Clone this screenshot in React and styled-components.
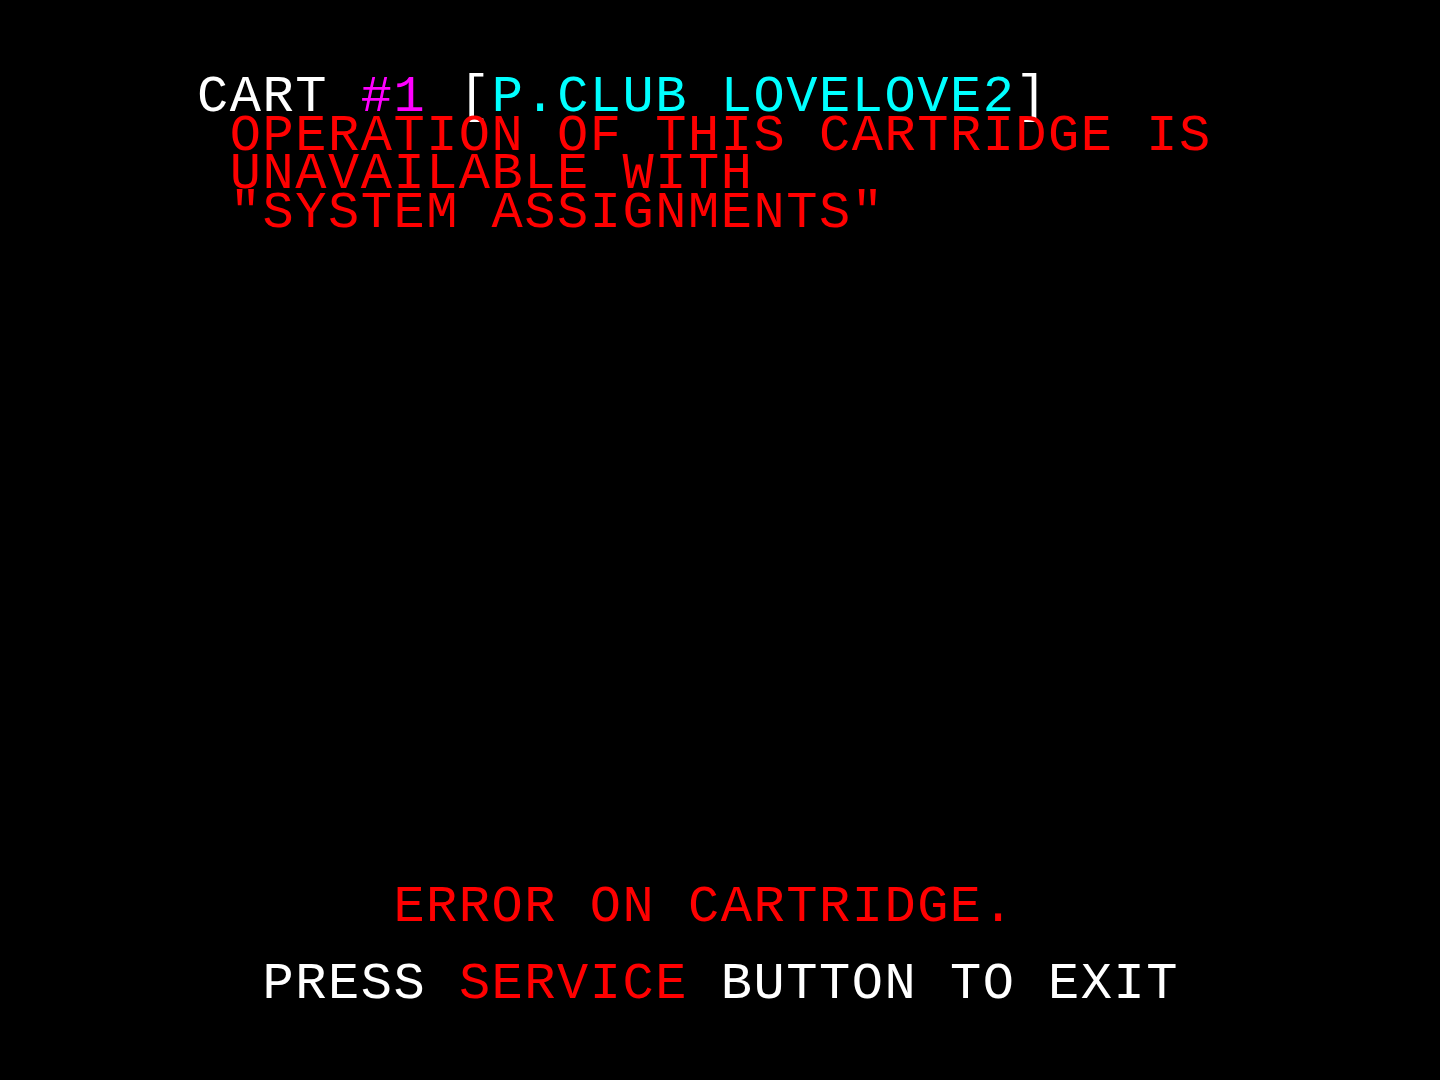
import styled, { createGlobalStyle } from 'styled-components'

const CELL = 32.73
const LINE = 38.57

const GlobalStyle = createGlobalStyle`
  html, body {
    margin: 0;
    padding: 0;
    background: #000;
  }
`

const Screen = styled.div`
  box-sizing: border-box;
  height: 100vh;
  background: #000;
  display: flex;
  flex-direction: column;
  justify-content: space-between;
  padding: 79px 0 75px 197px;
  font-family: "Liberation Mono", "DejaVu Sans Mono", monospace;
  font-size: 52px;
  letter-spacing: ${CELL - 31.2}px;
  line-height: ${LINE}px;
  white-space: pre;
  overflow: hidden;
`

const Block = styled.div`
  display: flex;
  flex-direction: column;
`

const Line = styled.div`
  height: ${LINE}px;
  padding-left: ${p => (p.$col || 0) * CELL}px;
  color: ${p => p.$color || '#fff'};
`

const Tone = styled.span`
  color: ${p => p.$color};
`

const WHITE = '#ffffff'
const RED = '#ff0000'
const CYAN = '#00ffff'
const MAGENTA = '#ff00ff'

export default function App() {
  return (
    <>
      <GlobalStyle />
      <Screen>
        <Block>
          <Line $color={WHITE}>
            CART <Tone $color={MAGENTA}>#1</Tone> [<Tone $color={CYAN}>P.CLUB LOVELOVE2</Tone>]
          </Line>
          <Line $col={1} $color={RED}>OPERATION OF THIS CARTRIDGE IS</Line>
          <Line $col={1} $color={RED}>UNAVAILABLE WITH</Line>
          <Line $col={1} $color={RED}>"SYSTEM ASSIGNMENTS"</Line>
        </Block>
        <Block>
          <Line $col={6} $color={RED}>ERROR ON CARTRIDGE.</Line>
          <Line />
          <Line $col={2} $color={WHITE}>
            PRESS <Tone $color={RED}>SERVICE</Tone> BUTTON TO EXIT
          </Line>
        </Block>
      </Screen>
    </>
  )
}
